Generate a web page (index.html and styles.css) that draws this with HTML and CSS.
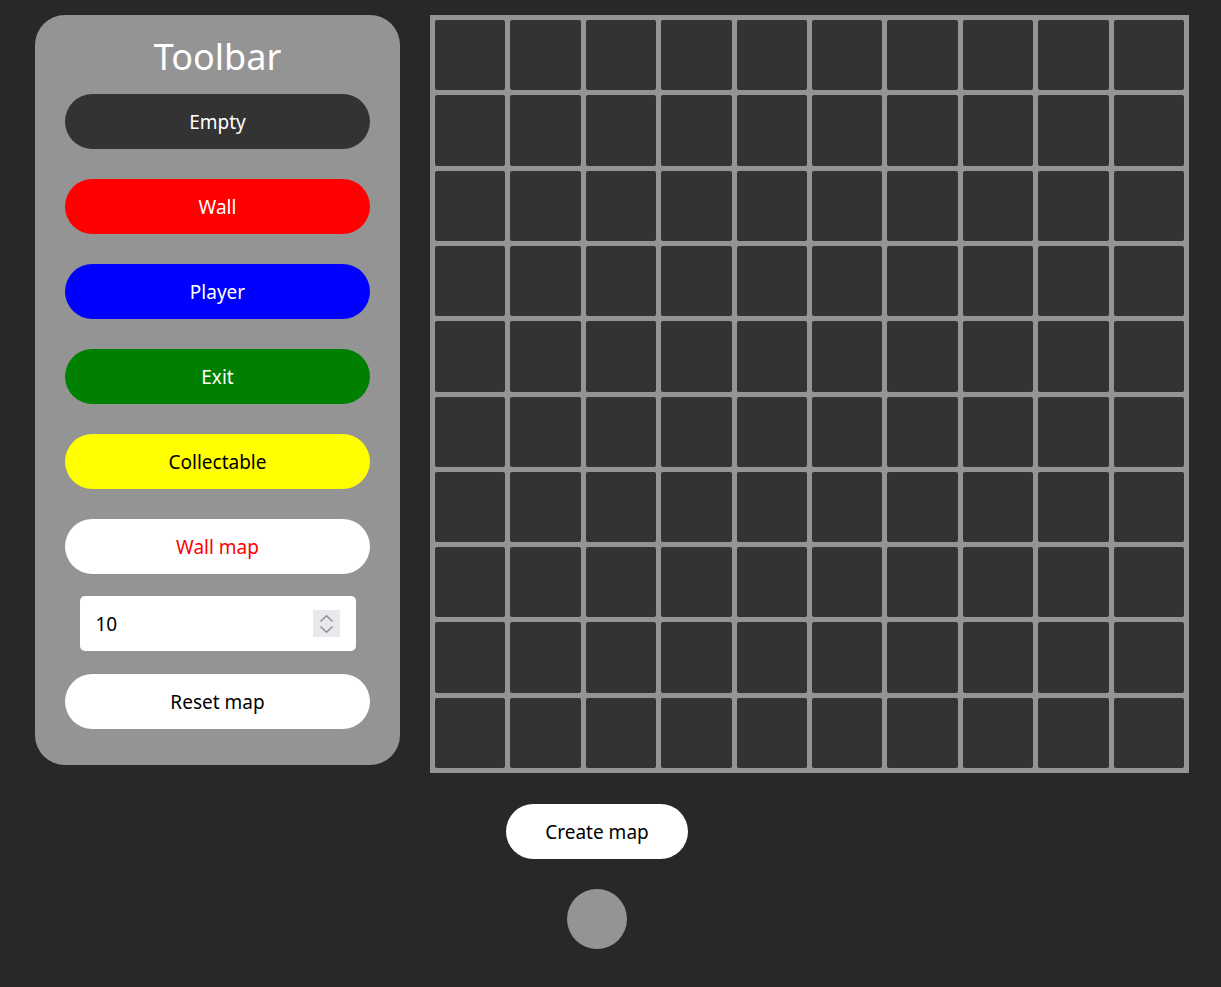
FILE: index.html
```html
<!DOCTYPE html>
<html>
<head>
<meta charset="utf-8">
<link rel="stylesheet" href="styles.css">
</head>
<body>
<div class="top">
  <aside class="toolbar">
    <h1 class="title">Toolbar</h1>
    <button class="tool tool-empty">Empty</button>
    <button class="tool tool-wall">Wall</button>
    <button class="tool tool-player">Player</button>
    <button class="tool tool-exit">Exit</button>
    <button class="tool tool-collect">Collectable</button>
    <button class="tool tool-wallmap">Wall map</button>
    <div class="size-input">
      <span class="size-value">10</span>
      <span class="spinner">
        <svg width="27" height="27" viewBox="0 0 27 27">
          <path d="M7.5 11.5 L13.5 5.8 L19.5 11.5" fill="none" stroke="#8f8f9d" stroke-width="1.5"/>
          <path d="M7.5 16.5 L13.5 22.2 L19.5 16.5" fill="none" stroke="#8f8f9d" stroke-width="1.5"/>
        </svg>
      </span>
    </div>
    <button class="tool tool-reset">Reset map</button>
  </aside>
  <div class="grid">
    <div class="cell"></div><div class="cell"></div><div class="cell"></div><div class="cell"></div><div class="cell"></div><div class="cell"></div><div class="cell"></div><div class="cell"></div><div class="cell"></div><div class="cell"></div>
    <div class="cell"></div><div class="cell"></div><div class="cell"></div><div class="cell"></div><div class="cell"></div><div class="cell"></div><div class="cell"></div><div class="cell"></div><div class="cell"></div><div class="cell"></div>
    <div class="cell"></div><div class="cell"></div><div class="cell"></div><div class="cell"></div><div class="cell"></div><div class="cell"></div><div class="cell"></div><div class="cell"></div><div class="cell"></div><div class="cell"></div>
    <div class="cell"></div><div class="cell"></div><div class="cell"></div><div class="cell"></div><div class="cell"></div><div class="cell"></div><div class="cell"></div><div class="cell"></div><div class="cell"></div><div class="cell"></div>
    <div class="cell"></div><div class="cell"></div><div class="cell"></div><div class="cell"></div><div class="cell"></div><div class="cell"></div><div class="cell"></div><div class="cell"></div><div class="cell"></div><div class="cell"></div>
    <div class="cell"></div><div class="cell"></div><div class="cell"></div><div class="cell"></div><div class="cell"></div><div class="cell"></div><div class="cell"></div><div class="cell"></div><div class="cell"></div><div class="cell"></div>
    <div class="cell"></div><div class="cell"></div><div class="cell"></div><div class="cell"></div><div class="cell"></div><div class="cell"></div><div class="cell"></div><div class="cell"></div><div class="cell"></div><div class="cell"></div>
    <div class="cell"></div><div class="cell"></div><div class="cell"></div><div class="cell"></div><div class="cell"></div><div class="cell"></div><div class="cell"></div><div class="cell"></div><div class="cell"></div><div class="cell"></div>
    <div class="cell"></div><div class="cell"></div><div class="cell"></div><div class="cell"></div><div class="cell"></div><div class="cell"></div><div class="cell"></div><div class="cell"></div><div class="cell"></div><div class="cell"></div>
    <div class="cell"></div><div class="cell"></div><div class="cell"></div><div class="cell"></div><div class="cell"></div><div class="cell"></div><div class="cell"></div><div class="cell"></div><div class="cell"></div><div class="cell"></div>
  </div>
</div>
<div class="bottom">
  <button class="create">Create map</button>
  <div class="dot"></div>
</div>
</body>
</html>
```

FILE: styles.css
```css
* { box-sizing: border-box; }
html, body {
  margin: 0;
  padding: 0;
  background: #282828;
  font-family: "Noto Sans", "Open Sans", sans-serif;
}
body {
  width: 1221px;
  height: 987px;
  overflow: hidden;
}
.top {
  display: flex;
  align-items: flex-start;
  gap: 30px;
  padding: 15px 0 0 35px;
}
.toolbar {
  width: 365px;
  background: #949494;
  border-radius: 30px;
  padding: 20px 30px 36px;
  display: flex;
  flex-direction: column;
  align-items: center;
}
.title {
  margin: 0 0 15px;
  font-size: 36px;
  line-height: 44px;
  font-weight: 400;
  color: #fff;
}
.tool {
  width: 305px;
  height: 55px;
  border: none;
  border-radius: 28px;
  font-family: inherit;
  font-size: 19px;
  margin: 0 0 30px;
  padding: 0;
  cursor: pointer;
}
.tool-empty { background: #333333; color: #fff; }
.tool-wall { background: #ff0000; color: #fff; }
.tool-player { background: #0000ff; color: #fff; }
.tool-exit { background: #008000; color: #fff; }
.tool-collect { background: #ffff00; color: #000; }
.tool-wallmap { background: #fff; color: #ff0000; margin-bottom: 22px; }
.tool-reset { background: #fff; color: #000; margin-bottom: 0; }
.size-input {
  width: 276px;
  height: 55px;
  background: #fff;
  border-radius: 5px;
  display: flex;
  align-items: center;
  justify-content: space-between;
  padding: 0 16px;
  margin-bottom: 23px;
}
.size-value {
  font-size: 19px;
  color: #000;
}
.spinner {
  display: flex;
  width: 27px;
  height: 27px;
  background: #e9e9ed;
}
.grid {
  width: 759px;
  height: 758px;
  background: #949494;
  padding: 5px;
  display: grid;
  grid-template-columns: repeat(10, 1fr);
  grid-template-rows: repeat(10, 1fr);
  gap: 5px;
}
.cell {
  background: #333333;
  border-radius: 2px;
}
.bottom {
  width: 1194px;
  display: flex;
  flex-direction: column;
  align-items: center;
  padding-top: 31px;
}
.create {
  width: 182px;
  height: 55px;
  border: none;
  border-radius: 28px;
  background: #fff;
  color: #000;
  font-family: inherit;
  font-size: 19px;
  padding: 0;
}
.dot {
  width: 60px;
  height: 60px;
  border-radius: 50%;
  background: #949494;
  margin-top: 30px;
}
```
